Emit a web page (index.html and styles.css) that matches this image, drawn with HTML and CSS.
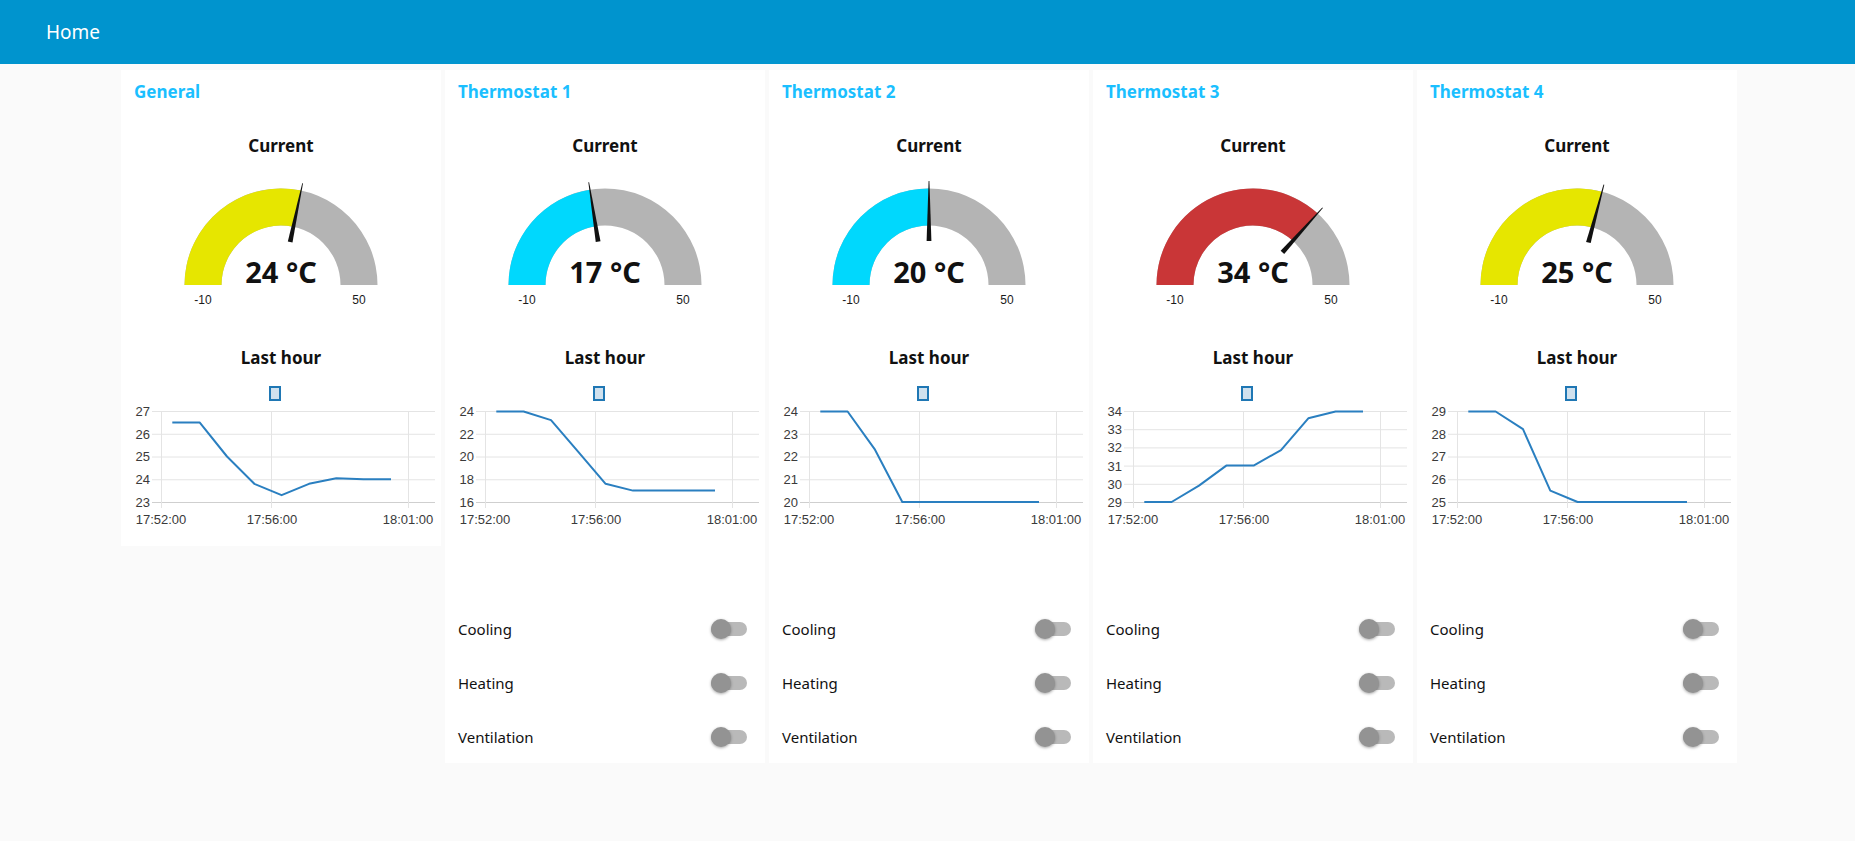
FILE: index.html
```html
<!DOCTYPE html>
<html lang="en">
<head>
<meta charset="utf-8">
<title>Home</title>
<link rel="stylesheet" href="styles.css">
</head>
<body>
<header class="toolbar"><span class="toolbar-title">Home</span></header>
<main class="groups">

  <!-- General -->
  <section class="card">
    <div class="group-title">General</div>
    <div class="widget-label">Current</div>
    <svg class="gauge" viewBox="0 0 320 150" width="320" height="150">
      <path class="g-bg" d="M63.5 125 A96.5 96.5 0 0 1 256.5 125 L219.5 125 A59.5 59.5 0 0 0 100.5 125 Z"/>
      <path class="g-yellow" d="M63.5 125 A96.5 96.5 0 0 1 180.06 30.61 L172.37 66.8 A59.5 59.5 0 0 0 100.5 125 Z"/>
      <polygon class="needle" points="157.6,81 162.4,81 160.4,21 159.6,21" transform="rotate(12 160 125)"/>
      <text class="g-value" x="160" y="123">24 °C</text>
      <text class="g-minmax" x="82" y="144">-10</text>
      <text class="g-minmax" x="238" y="144">50</text>
    </svg>
    <div class="widget-label label-chart">Last hour</div>
    <svg class="chart" viewBox="0 0 320 157" width="320" height="157">
      <rect class="legend" x="149" y="12" width="10" height="13"/>
      <line class="grid" x1="31" y1="36.5" x2="314" y2="36.5"/>
      <line class="grid" x1="31" y1="59.25" x2="314" y2="59.25"/>
      <line class="grid" x1="31" y1="82" x2="314" y2="82"/>
      <line class="grid" x1="31" y1="104.75" x2="314" y2="104.75"/>
      <line class="grid base" x1="31" y1="127.5" x2="314" y2="127.5"/>
      <line class="grid" x1="40.5" y1="36" x2="40.5" y2="133"/>
      <line class="grid" x1="150.5" y1="36" x2="150.5" y2="133"/>
      <line class="grid" x1="287.5" y1="36" x2="287.5" y2="133"/>
      <text class="y-lbl" x="29" y="41">27</text>
      <text class="y-lbl" x="29" y="64">26</text>
      <text class="y-lbl" x="29" y="86">25</text>
      <text class="y-lbl" x="29" y="109">24</text>
      <text class="y-lbl" x="29" y="132">23</text>
      <text class="x-lbl" x="40" y="149">17:52:00</text>
      <text class="x-lbl" x="151" y="149">17:56:00</text>
      <text class="x-lbl" x="287" y="149">18:01:00</text>
      <polyline class="line" points="51.3,47.4 78.6,47.4 106,81.5 133.3,108.8 160.6,120.2 188,108.8 215.3,103.3 242.6,104.25 270,104.25"/>
    </svg>
  </section>

  <!-- Thermostat 1 -->
  <section class="card">
    <div class="group-title">Thermostat 1</div>
    <div class="widget-label">Current</div>
    <svg class="gauge" viewBox="0 0 320 150" width="320" height="150">
      <path class="g-bg" d="M63.5 125 A96.5 96.5 0 0 1 256.5 125 L219.5 125 A59.5 59.5 0 0 0 100.5 125 Z"/>
      <path class="g-cyan" d="M63.5 125 A96.5 96.5 0 0 1 144.91 29.69 L150.69 66.23 A59.5 59.5 0 0 0 100.5 125 Z"/>
      <polygon class="needle" points="157.6,81 162.4,81 160.4,21 159.6,21" transform="rotate(-9 160 125)"/>
      <text class="g-value" x="160" y="123">17 °C</text>
      <text class="g-minmax" x="82" y="144">-10</text>
      <text class="g-minmax" x="238" y="144">50</text>
    </svg>
    <div class="widget-label label-chart">Last hour</div>
    <svg class="chart" viewBox="0 0 320 157" width="320" height="157">
      <rect class="legend" x="149" y="12" width="10" height="13"/>
      <line class="grid" x1="31" y1="36.5" x2="314" y2="36.5"/>
      <line class="grid" x1="31" y1="59.25" x2="314" y2="59.25"/>
      <line class="grid" x1="31" y1="82" x2="314" y2="82"/>
      <line class="grid" x1="31" y1="104.75" x2="314" y2="104.75"/>
      <line class="grid base" x1="31" y1="127.5" x2="314" y2="127.5"/>
      <line class="grid" x1="40.5" y1="36" x2="40.5" y2="133"/>
      <line class="grid" x1="150.5" y1="36" x2="150.5" y2="133"/>
      <line class="grid" x1="287.5" y1="36" x2="287.5" y2="133"/>
      <text class="y-lbl" x="29" y="41">24</text>
      <text class="y-lbl" x="29" y="64">22</text>
      <text class="y-lbl" x="29" y="86">20</text>
      <text class="y-lbl" x="29" y="109">18</text>
      <text class="y-lbl" x="29" y="132">16</text>
      <text class="x-lbl" x="40" y="149">17:52:00</text>
      <text class="x-lbl" x="151" y="149">17:56:00</text>
      <text class="x-lbl" x="287" y="149">18:01:00</text>
      <polyline class="line" points="51.3,36.5 78.6,36.5 106,45.1 133.3,76.9 160.6,108.8 188,115.6 215.3,115.6 242.6,115.6 270,115.6"/>
    </svg>
    <div class="switches">
      <div class="switch-row"><span>Cooling</span><span class="switch"><span class="thumb"></span></span></div>
      <div class="switch-row"><span>Heating</span><span class="switch"><span class="thumb"></span></span></div>
      <div class="switch-row"><span>Ventilation</span><span class="switch"><span class="thumb"></span></span></div>
    </div>
  </section>

  <!-- Thermostat 2 -->
  <section class="card">
    <div class="group-title">Thermostat 2</div>
    <div class="widget-label">Current</div>
    <svg class="gauge" viewBox="0 0 320 150" width="320" height="150">
      <path class="g-bg" d="M63.5 125 A96.5 96.5 0 0 1 256.5 125 L219.5 125 A59.5 59.5 0 0 0 100.5 125 Z"/>
      <path class="g-cyan" d="M63.5 125 A96.5 96.5 0 0 1 160 28.5 L160 65.5 A59.5 59.5 0 0 0 100.5 125 Z"/>
      <polygon class="needle" points="157.6,81 162.4,81 160.4,21 159.6,21"/>
      <text class="g-value" x="160" y="123">20 °C</text>
      <text class="g-minmax" x="82" y="144">-10</text>
      <text class="g-minmax" x="238" y="144">50</text>
    </svg>
    <div class="widget-label label-chart">Last hour</div>
    <svg class="chart" viewBox="0 0 320 157" width="320" height="157">
      <rect class="legend" x="149" y="12" width="10" height="13"/>
      <line class="grid" x1="31" y1="36.5" x2="314" y2="36.5"/>
      <line class="grid" x1="31" y1="59.25" x2="314" y2="59.25"/>
      <line class="grid" x1="31" y1="82" x2="314" y2="82"/>
      <line class="grid" x1="31" y1="104.75" x2="314" y2="104.75"/>
      <line class="grid base" x1="31" y1="127.5" x2="314" y2="127.5"/>
      <line class="grid" x1="40.5" y1="36" x2="40.5" y2="133"/>
      <line class="grid" x1="150.5" y1="36" x2="150.5" y2="133"/>
      <line class="grid" x1="287.5" y1="36" x2="287.5" y2="133"/>
      <text class="y-lbl" x="29" y="41">24</text>
      <text class="y-lbl" x="29" y="64">23</text>
      <text class="y-lbl" x="29" y="86">22</text>
      <text class="y-lbl" x="29" y="109">21</text>
      <text class="y-lbl" x="29" y="132">20</text>
      <text class="x-lbl" x="40" y="149">17:52:00</text>
      <text class="x-lbl" x="151" y="149">17:56:00</text>
      <text class="x-lbl" x="287" y="149">18:01:00</text>
      <polyline class="line" points="51.3,36.5 78.6,36.5 106,74.7 133.3,127 160.6,127 188,127 215.3,127 242.6,127 270,127"/>
    </svg>
    <div class="switches">
      <div class="switch-row"><span>Cooling</span><span class="switch"><span class="thumb"></span></span></div>
      <div class="switch-row"><span>Heating</span><span class="switch"><span class="thumb"></span></span></div>
      <div class="switch-row"><span>Ventilation</span><span class="switch"><span class="thumb"></span></span></div>
    </div>
  </section>

  <!-- Thermostat 3 -->
  <section class="card">
    <div class="group-title">Thermostat 3</div>
    <div class="widget-label">Current</div>
    <svg class="gauge" viewBox="0 0 320 150" width="320" height="150">
      <path class="g-bg" d="M63.5 125 A96.5 96.5 0 0 1 256.5 125 L219.5 125 A59.5 59.5 0 0 0 100.5 125 Z"/>
      <path class="g-red" d="M63.5 125 A96.5 96.5 0 0 1 224.57 53.29 L199.81 80.78 A59.5 59.5 0 0 0 100.5 125 Z"/>
      <polygon class="needle" points="157.6,81 162.4,81 160.4,21 159.6,21" transform="rotate(42 160 125)"/>
      <text class="g-value" x="160" y="123">34 °C</text>
      <text class="g-minmax" x="82" y="144">-10</text>
      <text class="g-minmax" x="238" y="144">50</text>
    </svg>
    <div class="widget-label label-chart">Last hour</div>
    <svg class="chart" viewBox="0 0 320 157" width="320" height="157">
      <rect class="legend" x="149" y="12" width="10" height="13"/>
      <line class="grid" x1="31" y1="36.5" x2="314" y2="36.5"/>
      <line class="grid" x1="31" y1="54.7" x2="314" y2="54.7"/>
      <line class="grid" x1="31" y1="72.9" x2="314" y2="72.9"/>
      <line class="grid" x1="31" y1="91.1" x2="314" y2="91.1"/>
      <line class="grid" x1="31" y1="109.3" x2="314" y2="109.3"/>
      <line class="grid base" x1="31" y1="127.5" x2="314" y2="127.5"/>
      <line class="grid" x1="40.5" y1="36" x2="40.5" y2="133"/>
      <line class="grid" x1="150.5" y1="36" x2="150.5" y2="133"/>
      <line class="grid" x1="287.5" y1="36" x2="287.5" y2="133"/>
      <text class="y-lbl" x="29" y="41">34</text>
      <text class="y-lbl" x="29" y="59">33</text>
      <text class="y-lbl" x="29" y="77">32</text>
      <text class="y-lbl" x="29" y="96">31</text>
      <text class="y-lbl" x="29" y="114">30</text>
      <text class="y-lbl" x="29" y="132">29</text>
      <text class="x-lbl" x="40" y="149">17:52:00</text>
      <text class="x-lbl" x="151" y="149">17:56:00</text>
      <text class="x-lbl" x="287" y="149">18:01:00</text>
      <polyline class="line" points="51.3,127 78.6,127 106,110.6 133.3,90.6 160.6,90.6 188,75.1 215.3,43.3 242.6,36.5 270,36.5"/>
    </svg>
    <div class="switches">
      <div class="switch-row"><span>Cooling</span><span class="switch"><span class="thumb"></span></span></div>
      <div class="switch-row"><span>Heating</span><span class="switch"><span class="thumb"></span></span></div>
      <div class="switch-row"><span>Ventilation</span><span class="switch"><span class="thumb"></span></span></div>
    </div>
  </section>

  <!-- Thermostat 4 -->
  <section class="card">
    <div class="group-title">Thermostat 4</div>
    <div class="widget-label">Current</div>
    <svg class="gauge" viewBox="0 0 320 150" width="320" height="150">
      <path class="g-bg" d="M63.5 125 A96.5 96.5 0 0 1 256.5 125 L219.5 125 A59.5 59.5 0 0 0 100.5 125 Z"/>
      <path class="g-yellow" d="M63.5 125 A96.5 96.5 0 0 1 184.97 31.79 L175.4 67.53 A59.5 59.5 0 0 0 100.5 125 Z"/>
      <polygon class="needle" points="157.6,81 162.4,81 160.4,21 159.6,21" transform="rotate(15 160 125)"/>
      <text class="g-value" x="160" y="123">25 °C</text>
      <text class="g-minmax" x="82" y="144">-10</text>
      <text class="g-minmax" x="238" y="144">50</text>
    </svg>
    <div class="widget-label label-chart">Last hour</div>
    <svg class="chart" viewBox="0 0 320 157" width="320" height="157">
      <rect class="legend" x="149" y="12" width="10" height="13"/>
      <line class="grid" x1="31" y1="36.5" x2="314" y2="36.5"/>
      <line class="grid" x1="31" y1="59.25" x2="314" y2="59.25"/>
      <line class="grid" x1="31" y1="82" x2="314" y2="82"/>
      <line class="grid" x1="31" y1="104.75" x2="314" y2="104.75"/>
      <line class="grid base" x1="31" y1="127.5" x2="314" y2="127.5"/>
      <line class="grid" x1="40.5" y1="36" x2="40.5" y2="133"/>
      <line class="grid" x1="150.5" y1="36" x2="150.5" y2="133"/>
      <line class="grid" x1="287.5" y1="36" x2="287.5" y2="133"/>
      <text class="y-lbl" x="29" y="41">29</text>
      <text class="y-lbl" x="29" y="64">28</text>
      <text class="y-lbl" x="29" y="86">27</text>
      <text class="y-lbl" x="29" y="109">26</text>
      <text class="y-lbl" x="29" y="132">25</text>
      <text class="x-lbl" x="40" y="149">17:52:00</text>
      <text class="x-lbl" x="151" y="149">17:56:00</text>
      <text class="x-lbl" x="287" y="149">18:01:00</text>
      <polyline class="line" points="51.3,36.5 78.6,36.5 106,54.2 133.3,115.6 160.6,127 188,127 215.3,127 242.6,127 270,127"/>
    </svg>
    <div class="switches">
      <div class="switch-row"><span>Cooling</span><span class="switch"><span class="thumb"></span></span></div>
      <div class="switch-row"><span>Heating</span><span class="switch"><span class="thumb"></span></span></div>
      <div class="switch-row"><span>Ventilation</span><span class="switch"><span class="thumb"></span></span></div>
    </div>
  </section>

</main>
</body>
</html>
```

FILE: styles.css
```css
* { box-sizing: border-box; }

html, body {
  margin: 0;
  padding: 0;
  background: #fafafa;
  font-family: "Noto Sans", "Open Sans", sans-serif;
  color: #111;
}

.toolbar {
  height: 64px;
  background: #0094ce;
  display: flex;
  align-items: center;
  padding-left: 46px;
}

.toolbar-title {
  color: #fff;
  font-size: 19px;
  font-weight: 400;
}

.groups {
  display: flex;
  align-items: flex-start;
  gap: 4px;
  padding: 6px 0 0 121px;
}

.card {
  width: 320px;
  background: #fff;
  display: flex;
  flex-direction: column;
}

.group-title {
  height: 44px;
  line-height: 44px;
  padding-left: 13px;
  font-size: 17px;
  font-weight: 700;
  color: #1bbfff;
}

.widget-label {
  height: 22px;
  line-height: 22px;
  margin-top: 21px;
  text-align: center;
  font-size: 17px;
  font-weight: 700;
  color: #111;
}

.label-chart {
  margin-top: 37px;
}

.gauge {
  display: block;
  margin-top: 3px;
}

.g-bg { fill: #b4b4b4; }
.g-yellow { fill: #e6e600; }
.g-cyan { fill: #00d8fd; }
.g-red { fill: #c93637; }

.needle { fill: #111; }

.g-value {
  font-family: "Noto Sans", sans-serif;
  font-weight: 700;
  font-size: 29px;
  fill: #111;
  text-anchor: middle;
}

.g-minmax {
  font-family: "Liberation Sans", Arial, sans-serif;
  font-size: 12px;
  fill: #1a1a1a;
  text-anchor: middle;
}

.chart {
  display: block;
  margin-top: 6px;
  margin-bottom: 14px;
}

.legend {
  fill: #d0e1ee;
  stroke: #1f77b4;
  stroke-width: 2;
}

.grid {
  stroke: #e4e4e4;
  stroke-width: 1;
}

.grid.base { stroke: #cfcfcf; }

.y-lbl, .x-lbl {
  font-family: "Liberation Sans", Arial, sans-serif;
  font-size: 13px;
  fill: #3a3a3a;
}

.y-lbl { text-anchor: end; }
.x-lbl { text-anchor: middle; }

.line {
  fill: none;
  stroke: #2a7fc0;
  stroke-width: 2;
  stroke-linejoin: round;
}

.switches {
  margin-top: 59px;
  padding-bottom: 2px;
  display: flex;
  flex-direction: column;
  gap: 6px;
}

.switch-row {
  height: 48px;
  display: flex;
  align-items: center;
  justify-content: space-between;
  padding: 0 18px 0 13px;
  font-size: 15px;
  color: #111;
}

.switch {
  position: relative;
  width: 36px;
  height: 14px;
  border-radius: 7px;
  background: #b9b9b9;
}

.thumb {
  position: absolute;
  left: 0;
  top: -3px;
  width: 20px;
  height: 20px;
  border-radius: 50%;
  background: #939393;
  box-shadow: 0 1px 3px rgba(0, 0, 0, 0.35);
}
```
